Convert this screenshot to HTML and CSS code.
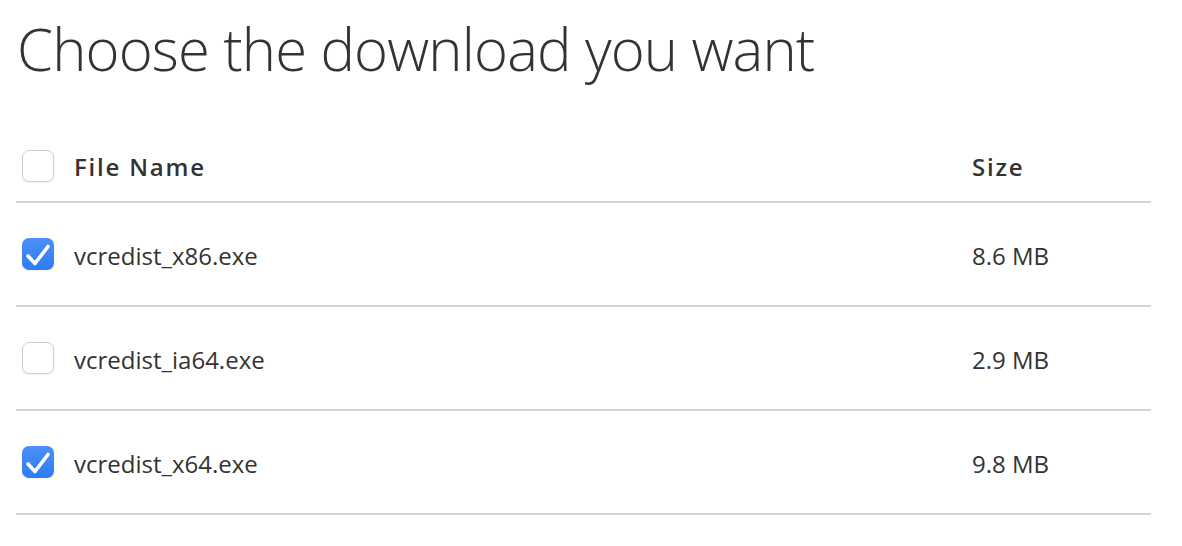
FILE: index.html
```html
<!DOCTYPE html>
<html>
<head>
<meta charset="utf-8">
<link rel="stylesheet" href="styles.css">
</head>
<body>
<div class="page">
  <h1 class="title">Choose the download you want</h1>
  <div class="table">
    <div class="row head">
      <span class="box"></span>
      <span class="name">File Name</span>
      <span class="size">Size</span>
    </div>
    <div class="row">
      <span class="box checked"><svg viewBox="0 0 32 32" width="32" height="32"><path d="M6 18 L13 25.5 L26 8.5" fill="none" stroke="#fff" stroke-width="3.6" stroke-linecap="round" stroke-linejoin="round"/></svg></span>
      <span class="name">vcredist_x86.exe</span>
      <span class="size">8.6 MB</span>
    </div>
    <div class="row">
      <span class="box"></span>
      <span class="name">vcredist_ia64.exe</span>
      <span class="size">2.9 MB</span>
    </div>
    <div class="row">
      <span class="box checked"><svg viewBox="0 0 32 32" width="32" height="32"><path d="M6 18 L13 25.5 L26 8.5" fill="none" stroke="#fff" stroke-width="3.6" stroke-linecap="round" stroke-linejoin="round"/></svg></span>
      <span class="name">vcredist_x64.exe</span>
      <span class="size">9.8 MB</span>
    </div>
  </div>
</div>
</body>
</html>
```
FILE: styles.css
```css
html, body {
  margin: 0;
  padding: 0;
  background: #fff;
}
body {
  font-family: "Open Sans", "Noto Sans", sans-serif;
  color: #333;
}
.page {
  padding: 9px 0 0 16px;
  width: 1135px;
}
.title {
  margin: 0;
  font-size: 58px;
  line-height: 80px;
  font-weight: 300;
  letter-spacing: -0.85px;
  color: #333;
  padding-left: 1px;
}
.table {
  margin-top: 41px;
}
.row {
  display: grid;
  grid-template-columns: 32px 1fr 179px;
  column-gap: 20px;
  align-items: center;
  padding: 35px 0 35px 6px;
  border-bottom: 2px solid #d4d4d4;
  font-size: 24px;
  line-height: 28px;
}
.row .name, .row .size {
  padding-top: 4px;
}
.row.head {
  padding: 20px 0 19px 6px;
}
.head .name, .head .size {
  font-weight: 600;
  letter-spacing: 1.8px;
  padding-top: 2px;
}
.box {
  width: 32px;
  height: 32px;
  box-sizing: border-box;
  border: 1px solid #cfcfcf;
  border-radius: 7px;
  background: #fff;
  box-shadow: 0 1px 2px rgba(0, 0, 0, 0.06);
  display: block;
}
.box.checked {
  border: none;
  background: linear-gradient(#4c90f8, #2e7bf5);
}
.box svg {
  display: block;
}
```
